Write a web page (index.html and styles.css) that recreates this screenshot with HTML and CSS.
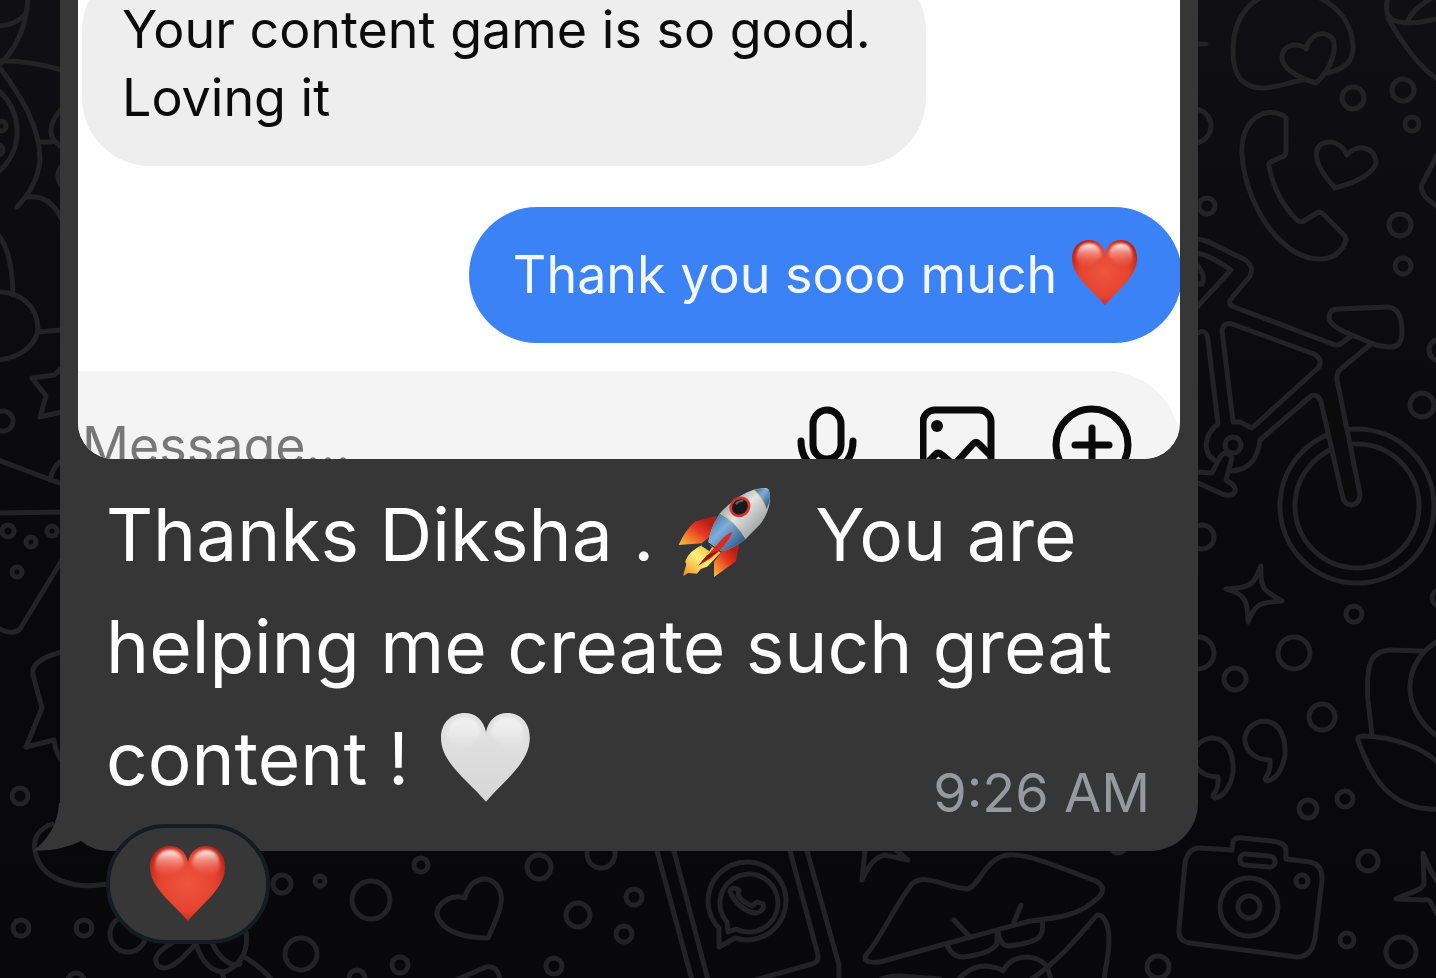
FILE: index.html
```html
<!DOCTYPE html>
<html lang="en">
  <head>
    <meta charset="utf-8" />
    <meta name="viewport" content="width=device-width, initial-scale=1">
    <title>Chat</title>
    <link rel="stylesheet" href="styles.css">
  </head>
  <body>

    <!-- doodle wallpaper -->
    <svg class="wallpaper" viewBox="0 0 1436 978" preserveAspectRatio="xMinYMin slice" aria-hidden="true">
      <!-- left edge -->
      <path d="M28-2C26 30 15 50 0 64M-2 26Q14 26 26 14M0 61C25 60 45 65 62 70M0 68C20 95 40 125 40 160Q38 185 17 207M-2 90C22 110 25 150-2 172M40 142H52M62 108Q45 128 54 140L62 148M28 197C45 195 55 205 62 220M62 165Q54 175 62 187" />
      <path d="M-2 235Q12 250 13 295M-2 292C20 292 37 305 38 328C37 345 20 358-2 360M38 332L62 330M62 368L54 375L32 378L46 396L40 417L62 412" />
      <path d="M-2 460L62 484M50 480Q52 468 62 460M-2 513L62 512M62 560L20 629Q12 636-2 628M62 652Q30 660 33 675L42 708L26 747L54 740Q56 755 62 760" />
      <circle cx="1" cy="126" r="5" /><circle cx="-2" cy="150" r="5" /><circle cx="3" cy="421" r="10" />
      <circle cx="8" cy="531" r="6" /><circle cx="31" cy="542" r="5" /><circle cx="52" cy="531" r="5" /><circle cx="17" cy="572" r="5" />
      <circle cx="20" cy="796" r="8" /><circle cx="21" cy="928" r="8" /><circle cx="84" cy="928" r="8" /><circle cx="76" cy="981" r="8" />

      <!-- butterfly -->
      <path d="M52 824C40 828 32 838 35 851C40 880 75 890 107 884M172 943Q150 955 158 966Q166 972 180 960L196 944Q205 972 225 972Q250 960 246 932M212 943Q225 968 240 964M246 958Q262 968 272 980M222 972L224 980" />
      <circle cx="128" cy="934" r="18" />

      <!-- bubbles and heart -->
      <circle cx="282" cy="884" r="9" /><circle cx="320" cy="881" r="5" /><circle cx="371" cy="900" r="19" /><circle cx="421" cy="865" r="7" />
      <circle cx="539" cy="867" r="12" /><circle cx="601" cy="854" r="14" /><circle cx="578" cy="915" r="12" /><circle cx="634" cy="897" r="8" />
      <circle cx="624" cy="934" r="8" /><circle cx="301" cy="954" r="16" /><circle cx="400" cy="965" r="8" /><circle cx="554" cy="966" r="8" /><circle cx="357" cy="978" r="8" />
      <path d="M465 898C450 893 436 905 437 915C442 932 465 938 488 938C496 920 507 900 498 887C488 872 468 880 465 898ZM458 979L486 967Q498 965 500 980" />

      <!-- phone with chat logo -->
      <path d="M657 851L692 980M674 851L708 980M790 851L818 955Q819 962 812 964L755 980M807 851L839 965V980" />
      <path d="M719 947V928A39 39 0 1 1 735 938ZM728 932L727 922A29 29 0 1 1 736 929Z" />
      <path d="M730 891C733 901 745 913 757 913Q765 910 763 904L757 902L752 906Q742 902 738 895L739 890Q732 886 730 891Z" />

      <!-- lips -->
      <path d="M865 850L862 880Q872 857 885 855L908 860L896 850" />
      <path d="M866 955C880 940 895 905 912 884C925 872 945 888 968 889C980 885 985 858 1008 855C1030 853 1070 872 1096 881Q1108 888 1098 898C1080 915 1060 918 1030 921L945 944L880 962Q862 964 866 955ZM954 920L970 937M1021 905L1014 922M947 945Q952 957 963 957Q990 954 997 944V931M998 932Q1001 946 1008 946Q1035 943 1040 936Q1044 930 1042 921" />
      <path d="M880 980Q885 976 900 976L940 979M958 980Q970 966 985 966Q998 967 1003 971Q1010 957 1028 957Q1040 958 1047 966L1051 980M1030 980C1060 960 1080 935 1096 916Q1102 912 1107 925C1112 940 1106 965 1104 980" />
      <circle cx="1158" cy="967" r="11" /><circle cx="1118" cy="845" r="8" />

      <!-- top right -->
      <path d="M1262-3C1240 8 1233 30 1233 52C1233 75 1243 88 1262 88C1275 88 1290 82 1303 80M1328 73C1345 68 1354 62 1353 45C1351 20 1335 5 1318-3" />
      <path d="M1306 49C1301 43 1282 42 1282 58C1283 70 1300 78 1316 83C1326 74 1336 58 1334 42C1330 30 1311 30 1306 49Z" />
      <path d="M1388-2C1384 12 1388 20 1400 22C1412 25 1426 21 1440 18M1408 20C1413 10 1422 3 1436-4M1388 18C1400 40 1422 72 1440 80M1440 150L1422 184Q1418 195 1440 208M1198 44H1206" />
      <path d="M1286 118C1282 113 1268 110 1260 115C1246 122 1241 138 1242 155C1244 185 1258 216 1274 234C1290 252 1306 260 1322 259C1334 258 1342 252 1346 240Q1346 238 1344 235L1323 214Q1320 211 1317 213L1304 221Q1301 223 1297 220C1283 206 1273 188 1269 166Q1268 163 1271 162L1284 156Q1286 154 1286 150Z" />
      <path d="M1347 155C1342 143 1328 138 1319 146C1311 158 1324 176 1335 188C1350 184 1372 176 1376 163C1376 148 1358 142 1347 155Z" />
      <circle cx="1353" cy="98" r="11" /><circle cx="1403" cy="90" r="11" /><circle cx="1412" cy="124" r="7" /><circle cx="1194" cy="126" r="17" />
      <circle cx="1207" cy="206" r="8" /><circle cx="1400" cy="225" r="11" /><circle cx="1403" cy="266" r="8" />

      <!-- bicycle -->
      <circle cx="1357" cy="506" r="77" /><circle cx="1357" cy="506" r="62" />
      <path class="solid" d="M1371 344L1342 368Q1336 372 1337 380L1360 494Q1360 504 1351 505Q1343 504 1342 494L1321 402Q1318 393 1311 396L1260 440" />
      <path d="M1196 239C1206 238 1222 250 1244 259Q1255 266 1250 276L1231 299Q1227 304 1234 307L1330 343Q1337 347 1342 343L1350 337M1196 253C1208 254 1222 264 1231 270L1196 308M1198 266Q1206 276 1202 284H1198" />
      <path d="M1338 309L1388 307Q1402 308 1402 332Q1402 348 1389 347L1376 345L1345 332Q1328 324 1329 316Q1330 309 1338 309ZM1222 330Q1224 322 1232 324L1314 354Q1324 360 1318 368L1252 428L1240 422H1233ZM1198 333Q1206 328 1208 340L1218 424C1203 436 1203 452 1214 460M1260 440C1258 456 1252 470 1232 471" />
      <path d="M1198 472L1212 473L1220 457Q1226 449 1232 458L1226 480Q1240 488 1233 494Q1228 497 1220 493L1198 483" />
      <circle cx="1233" cy="445" r="8" /><circle cx="1422" cy="405" r="12" /><circle cx="1440" cy="350" r="11" />
      <circle cx="1202" cy="537" r="12" /><circle cx="1354" cy="614" r="8" /><circle cx="1440" cy="598" r="8" />
      <path d="M1261 566C1260 590 1264 590 1282 601C1260 603 1256 602 1248 622C1248 602 1246 594 1226 589C1252 588 1254 584 1261 566Z" />

      <!-- quotes, flower, camera -->
      <circle cx="1198" cy="653" r="16" /><circle cx="1294" cy="653" r="16" /><circle cx="1235" cy="679" r="11" /><circle cx="1322" cy="717" r="13" />
      <circle cx="1308" cy="809" r="9" /><circle cx="1345" cy="799" r="8" /><circle cx="1368" cy="861" r="10" /><circle cx="1347" cy="940" r="7" /><circle cx="1401" cy="952" r="15" />
      <path id="quote" d="M1270 760C1250 760 1244 745 1245 737C1247 727 1256 721 1265 721C1280 722 1286 738 1285 755C1283 770 1275 780 1267 781Q1264 780 1266 777Q1271 770 1270 760Z" />
      <use href="#quote" x="-52" y="17" />
      <path d="M1372 735L1368 700C1366 665 1370 651 1390 650L1422 651M1440 640C1402 660 1398 710 1440 738M1440 765C1425 748 1395 737 1363 736Q1357 736 1358 740C1370 775 1390 812 1440 809" />
      <path d="M1440 918C1430 905 1432 898 1424 900L1396 899C1410 892 1425 890 1424 882L1423 853C1428 865 1430 872 1440 885" />
      <path d="M1200 848L1232 850L1233 842Q1235 837 1242 838L1272 841Q1287 843 1286 851V859L1310 862Q1323 865 1322 880L1315 938Q1312 957 1297 957L1190 943Q1178 941 1179 930L1185 863Q1188 848 1200 848Z" />
      <rect x="1240" y="855" width="35" height="11" rx="5" transform="rotate(5 1257 860)" />
      <circle cx="1249" cy="907" r="29" /><circle cx="1249" cy="907" r="11" /><circle cx="1302" cy="881" r="6" />
    </svg>

    <!-- shared emoji shapes -->
    <svg class="defs" aria-hidden="true">
      <defs>
        <radialGradient id="redFill" cx="50%" cy="50%" r="62%">
          <stop offset="0" stop-color="#ee553f" />
          <stop offset=".6" stop-color="#e6432e" />
          <stop offset="1" stop-color="#b51c12" />
        </radialGradient>
        <linearGradient id="redShine" x1="0" y1="0" x2="0" y2="1">
          <stop offset="0" stop-color="#fff" />
          <stop offset=".4" stop-color="#f9a79b" stop-opacity=".7" />
          <stop offset="1" stop-color="#f47463" stop-opacity="0" />
        </linearGradient>
        <linearGradient id="whiteShine" x1="0" y1="0" x2="0" y2="1">
          <stop offset="0" stop-color="#fff" stop-opacity=".6" />
          <stop offset="1" stop-color="#fff" stop-opacity="0" />
        </linearGradient>
        <linearGradient id="whiteFill" x1="0" y1="0" x2="0" y2="1">
          <stop offset="0" stop-color="#e2e2e2" />
          <stop offset=".4" stop-color="#dedede" />
          <stop offset="1" stop-color="#d6d6d6" />
        </linearGradient>
        <linearGradient id="hull" x1="0" y1="0" x2="1" y2="1">
          <stop offset=".2" stop-color="#8d9296" />
          <stop offset=".45" stop-color="#e2e3e2" />
          <stop offset=".8" stop-color="#8e9492" />
        </linearGradient>
        <linearGradient id="hullBlue" x1="0" y1="0" x2="1" y2="1">
          <stop offset="0" stop-color="#35608f" />
          <stop offset=".4" stop-color="#80aedb" />
          <stop offset="1" stop-color="#17406f" />
        </linearGradient>
        <linearGradient id="fin" x1="1" y1="0" x2="0" y2="1">
          <stop offset=".2" stop-color="#b81c16" />
          <stop offset=".5" stop-color="#e83a22" />
          <stop offset="1" stop-color="#ffc63a" />
        </linearGradient>
        <linearGradient id="flame" x1="1" y1="0" x2="0" y2="1">
          <stop offset="0" stop-color="#f6a42c" />
          <stop offset=".5" stop-color="#fff07a" />
          <stop offset="1" stop-color="#ef8a22" />
        </linearGradient>
        <filter id="soft" x="-20%" y="-20%" width="140%" height="140%">
          <feGaussianBlur stdDeviation="1.5" />
        </filter>
        <path id="heartShape" d="M38 75C22 56 0 42 0 21C0 8 9 0 20 0C29 0 36 6 38 16C40 6 47 0 56 0C67 0 75 8 75 21C75 42 54 56 38 75Z" />
        <path id="heartShine" d="M5 22C5 9 11 4 20 4C28 4 33 9 34 18C30 23 24 28 18 30Q8 32 5 22ZM42 18C43 9 48 4 56 4C65 4 70 9 70 22Q68 32 58 30C52 28 46 23 42 18Z" />
        <symbol id="redHeart" viewBox="0 0 76 76">
          <use href="#heartShape" fill="url(#redFill)" />
          <use href="#heartShine" fill="url(#redShine)" filter="url(#soft)" />
        </symbol>
        <symbol id="whiteHeart" viewBox="0 0 76 76">
          <use href="#heartShape" fill="url(#whiteFill)" />
          <use href="#heartShine" fill="url(#whiteShine)" filter="url(#soft)" />
        </symbol>
      </defs>
    </svg>

    <main class="chat">
      <article class="bubble">

        <section class="photo">
          <p class="message received">Your content game is so good.<br>Loving it</p>
          <p class="message sent">Thank you sooo much
            <svg class="emoji" role="img" aria-label="red heart"><use href="#redHeart" /></svg>
          </p>
          <form class="composer">
            <input type="text" class="composer-input" placeholder="Message..." aria-label="Message">
            <button type="button" class="icon-button" aria-label="Record">
              <svg viewBox="0 0 80 80">
                <rect x="25" y="5" width="28" height="49" rx="14" />
                <path d="M13 36C13 54 24 65 39 65C54 65 65 54 65 36M39 65V78" />
              </svg>
            </button>
            <button type="button" class="icon-button" aria-label="Photo">
              <svg viewBox="0 0 80 80">
                <rect x="3" y="5" width="68" height="68" rx="12" />
                <circle class="dot" cx="17" cy="21" r="6" />
                <path d="M5 60L15 50Q18 46 22 50L34 60M34 60L53 39Q56 36 59 39L70 50" />
              </svg>
            </button>
            <button type="button" class="icon-button" aria-label="Add">
              <svg viewBox="0 0 80 80">
                <circle cx="40" cy="40" r="36" />
                <path d="M40 23V57M23 40H57" />
              </svg>
            </button>
          </form>
        </section>

        <div class="caption">
          <p class="caption-text">Thanks Diksha .
            <svg class="emoji rocket" viewBox="50 50 290 290" role="img" aria-label="rocket">
              <path d="M170 143L105 160Q75 185 55 231L125 226L150 205Z" fill="url(#fin)" />
              <path d="M238 230L228 280L162 328V282L190 245Z" fill="url(#fin)" />
              <path d="M125 232Q85 250 75 280L78 290L68 325L84 316L110 318L122 304L142 296L182 254L150 232Z" fill="url(#flame)" />
              <path d="M322 60C270 55 215 95 180 135C160 165 148 195 145 222L184 250C210 245 240 228 258 212L300 170C325 140 338 95 327 64Z" fill="url(#hull)" />
              <path d="M180 135C160 165 148 195 145 222L184 250C210 245 240 228 258 212Q232 168 180 135Z" fill="url(#hullBlue)" />
              <path d="M283 65Q312 56 327 64Q337 88 320 124Q308 85 283 65Z" fill="url(#hullBlue)" />
              <path d="M180 135Q232 168 258 212M283 65Q308 85 320 124" fill="none" stroke="#d8bd62" stroke-width="3" />
              <ellipse cx="240" cy="116" rx="29" ry="26" fill="#161a1c" stroke="#d9322a" stroke-width="8" transform="rotate(-40 240 116)" />
              <path d="M228 108Q236 97 250 98" fill="none" stroke="#59656b" stroke-width="6" />
              <path d="M132 221L156 237L148 250L124 234Z" fill="#243642" />
              <path d="M218 192Q195 200 180 220L114 294L150 273Q200 235 218 192Z" fill="#d52c24" />
              <path d="M180 246L114 294L140 262Z" fill="#861913" />
            </svg>
            You are<br>helping me create such great<br>content !
            <svg class="emoji" role="img" aria-label="white heart"><use href="#whiteHeart" /></svg>
          </p>
          <time class="time" datetime="09:26">9:26 AM</time>
        </div>

        <svg class="tail" viewBox="0 0 80 50" aria-hidden="true">
          <path d="M27 0C26 20 17 36 1 48Q30 48 49 38Q60 48 80 48V0Z" />
          <path class="notch" d="M1 48Q30 48 49 38Q60 48 80 48V49H28Z" />
        </svg>
        <button type="button" class="reaction" aria-label="Reaction: red heart">
          <svg class="emoji"><use href="#redHeart" /></svg>
        </button>
      </article>
    </main>

  </body>
</html>
```
FILE: styles.css
```css
* {
  margin: 0;
  padding: 0;
  box-sizing: border-box;
}

body {
  background: linear-gradient(180deg, #0f0f14 0, #0c0c0e 300px, #09090b 600px, #08080a 100%);
  font-family: Inter, 'Liberation Sans', sans-serif;
  color: #ffffff;
  min-height: 100vh;
  overflow: hidden;
}

.wallpaper {
  position: fixed;
  inset: 0;
  width: 100%;
  height: 100%;
  fill: none;
  stroke: #232325;
  stroke-width: 5px;
  stroke-linecap: round;
  stroke-linejoin: round;
}

.wallpaper .solid {
  fill: #0b0b0c;
}

.defs {
  position: absolute;
  width: 0;
  height: 0;
}

.chat {
  padding: 0 238px 127px 60px;
}

.bubble {
  position: relative;
  background: #363636;
  border-radius: 0 0 48px 0;
  padding: 0 18px;
}

/* screenshot inside the bubble, cropped top and bottom */
.photo {
  display: flex;
  flex-direction: column;
  height: 459px;
  background: #ffffff;
  border-radius: 0 0 36px 36px;
  overflow: hidden;
}

.message {
  font-size: 52px;
  line-height: 68px;
  padding: 34px 44px;
}

.received {
  align-self: flex-start;
  width: 844px;
  max-width: 100%;
  margin: -38px 0 0 4px;
  padding: 34px 40px;
  background: #eeeeee;
  color: #0b0b0b;
  border-radius: 68px;
}

.sent {
  align-self: flex-end;
  flex-shrink: 0;
  margin: 41px -2px 28px 0;
  background: #3b82f6;
  color: #f4f8ff;
  border-radius: 68px;
  white-space: nowrap;
}

.emoji {
  width: 66px;
  height: 66px;
}

.sent .emoji {
  margin: -10px 0;
  vertical-align: -3px;
}

.composer {
  display: flex;
  flex-shrink: 0;
  align-items: center;
  height: 148px;
  padding: 0 48px 0 4px;
  gap: 52px;
  background: #f4f4f4;
  border-radius: 0 74px 74px 0;
}

.composer-input {
  flex: 1;
  min-width: 0;
  border: none;
  outline: none;
  background: transparent;
  font-family: inherit;
  font-size: 52px;
}

.composer-input::placeholder {
  color: #777777;
  opacity: 1;
}

.icon-button {
  width: 80px;
  height: 80px;
  border: none;
  background: transparent;
}

.icon-button svg {
  display: block;
  fill: none;
  stroke: #0a0a0a;
  stroke-width: 7px;
  stroke-linecap: round;
  stroke-linejoin: round;
}

.icon-button .dot {
  fill: #0a0a0a;
  stroke: none;
}

/* text and time share one cell */
.caption {
  display: grid;
  padding: 20px 30px 36px 28px;
}

.caption-text,
.time {
  grid-area: 1 / 1;
}

.caption-text {
  font-size: 73px;
  line-height: 112px;
  white-space: nowrap;
}

.caption .emoji {
  width: 90px;
  height: 90px;
  margin: -20px 0 -20px 12px;
  vertical-align: 2px;
}

.caption .rocket {
  width: 96px;
  height: 96px;
  margin-left: 2px;
  margin-right: 22px;
  vertical-align: 0;
}

.time {
  place-self: end;
  color: #98989f;
  font-size: 54px;
  line-height: 44px;
}

.tail {
  position: absolute;
  left: -28px;
  bottom: -2px;
  width: 80px;
  height: 50px;
  fill: #363636;
}

.tail .notch {
  fill: #08080a;
}

.reaction {
  position: absolute;
  left: 46px;
  bottom: -93px;
  display: flex;
  align-items: center;
  justify-content: center;
  width: 164px;
  height: 120px;
  background: #373737;
  border: 4px solid #121c21;
  border-radius: 60px;
}

.reaction .emoji {
  width: 76px;
  height: 76px;
}
```
